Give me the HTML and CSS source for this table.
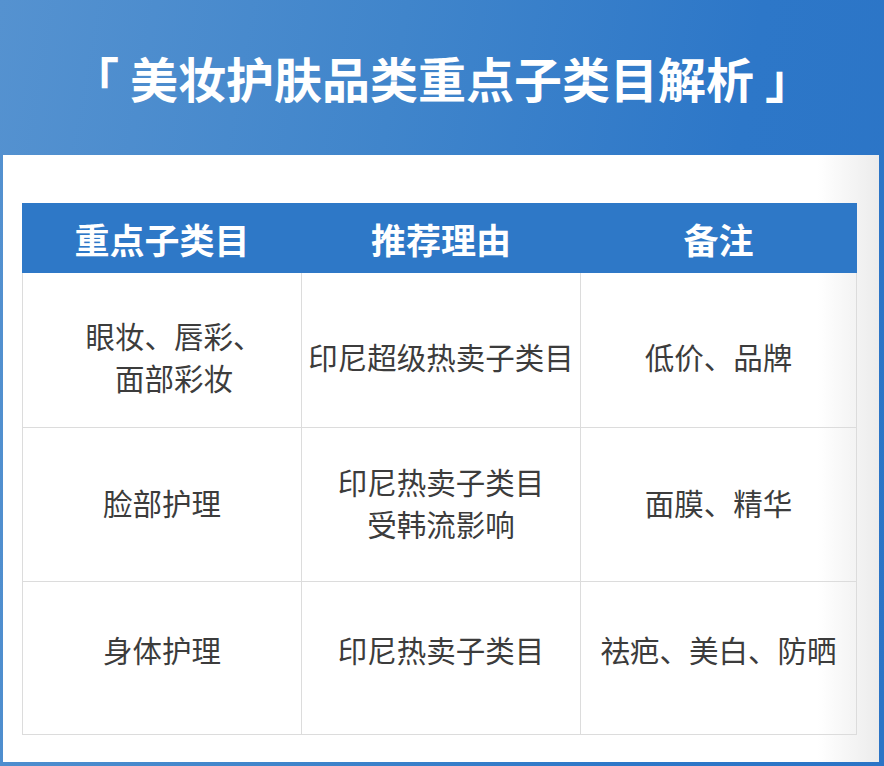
FILE: index.html
```html
<!DOCTYPE html>
<html lang="zh-CN">
<head>
<meta charset="utf-8">
<title>美妆护肤品类重点子类目解析</title>
<link rel="stylesheet" href="styles.css">
</head>
<body>
<div class="page">
  <header class="title">「 美妆护肤品类重点子类目解析 」</header>
  <section class="card">
    <table class="grid">
      <thead>
        <tr>
          <th>重点子类目</th>
          <th>推荐理由</th>
          <th>备注</th>
        </tr>
      </thead>
      <tbody>
        <tr class="r1">
          <td class="shift">眼妆、唇彩、<br>面部彩妆</td>
          <td>印尼超级热卖子类目</td>
          <td>低价、品牌</td>
        </tr>
        <tr class="r2">
          <td>脸部护理</td>
          <td>印尼热卖子类目<br>受韩流影响</td>
          <td>面膜、精华</td>
        </tr>
        <tr class="r3">
          <td>身体护理</td>
          <td>印尼热卖子类目</td>
          <td>祛疤、美白、防晒</td>
        </tr>
      </tbody>
    </table>
  </section>
</div>
</body>
</html>
```
FILE: styles.css
```css
html, body {
  margin: 0;
  padding: 0;
}
body {
  width: 884px;
  height: 766px;
  overflow: hidden;
  background: linear-gradient(100deg, #5592d0 0%, #4085cb 40%, #2d77c8 75%, #2b74c6 100%);
  font-family: "Noto Sans CJK SC", "Noto Sans", sans-serif;
}
.page {
  display: flex;
  flex-direction: column;
  height: 766px;
}
.title {
  height: 157px;
  box-sizing: border-box;
  padding-bottom: 2px;
  display: flex;
  align-items: center;
  justify-content: center;
  color: #ffffff;
  font-size: 48px;
  font-weight: 700;
  letter-spacing: 0;
}
.card {
  margin: 0 5px 4px 3px;
  padding: 48px 22px 27px 19px;
  flex: 1;
  background: linear-gradient(to right, #ffffff 0%, #ffffff 93%, #ececec 100%);
}
.grid {
  border-collapse: collapse;
  table-layout: fixed;
  width: 835px;
}
.grid th {
  background: #2e78c7;
  color: #ffffff;
  font-size: 35px;
  font-weight: 700;
  height: 68px;
  padding: 0;
  text-align: center;
  vertical-align: middle;
  border: 1px solid #2e78c7;
}
.grid th:nth-child(1), .grid td:nth-child(1) { width: 278px; }
.grid th:nth-child(2), .grid td:nth-child(2) { width: 278px; }
.grid td {
  border: 1px solid #dcdcdc;
  color: #3c3c3c;
  font-size: 29.5px;
  font-weight: 400;
  line-height: 42px;
  text-align: center;
  vertical-align: middle;
  padding: 0;
  box-sizing: border-box;
}
.r1 td { height: 155px; padding-top: 12px; }
.r1 td.shift { padding-left: 24px; }
.r2 td { height: 154px; padding-bottom: 6px; }
.r3 td { height: 153px; padding-bottom: 18px; }
```
